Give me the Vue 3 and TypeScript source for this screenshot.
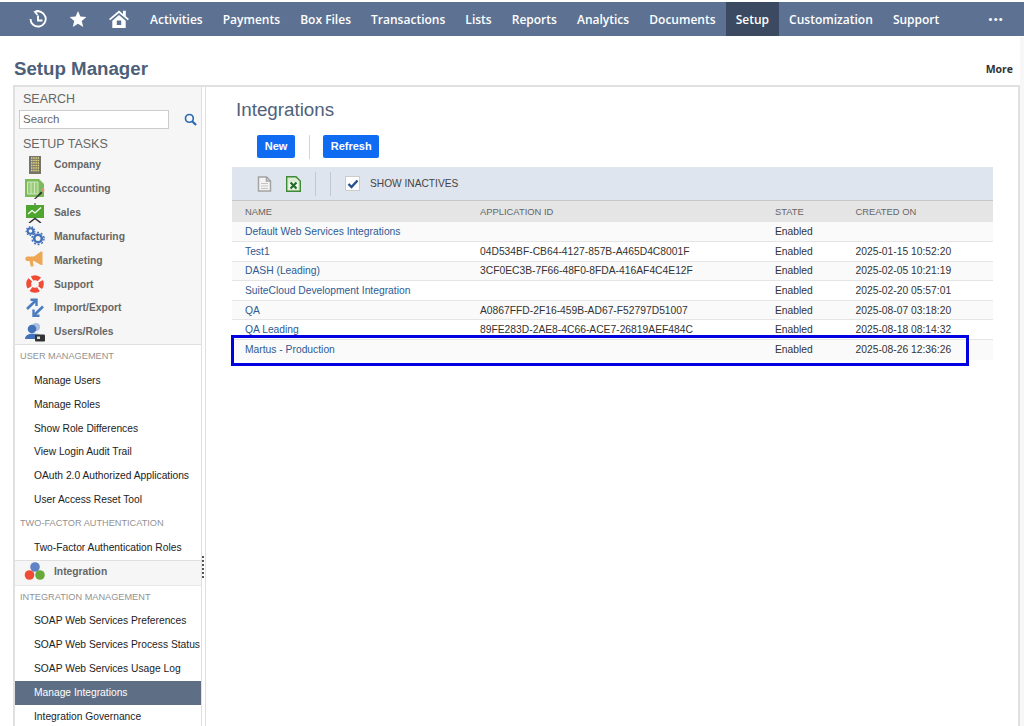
<script setup lang="ts">
const navItems = ['Activities','Payments','Box Files','Transactions','Lists','Reports','Analytics','Documents','Setup','Customization','Support']
const tasks = ['Company','Accounting','Sales','Manufacturing','Marketing','Support','Import/Export','Users/Roles']
const userLinks = ['Manage Users','Manage Roles','Show Role Differences','View Login Audit Trail','OAuth 2.0 Authorized Applications','User Access Reset Tool']
const integrationLinks = ['SOAP Web Services Preferences','SOAP Web Services Process Status','SOAP Web Services Usage Log','Manage Integrations','Integration Governance']
const rows = [
  { name:'Default Web Services Integrations', id:'', state:'Enabled', created:'' },
  { name:'Test1', id:'04D534BF-CB64-4127-857B-A465D4C8001F', state:'Enabled', created:'2025-01-15 10:52:20' },
  { name:'DASH (Leading)', id:'3CF0EC3B-7F66-48F0-8FDA-416AF4C4E12F', state:'Enabled', created:'2025-02-05 10:21:19' },
  { name:'SuiteCloud Development Integration', id:'', state:'Enabled', created:'2025-02-20 05:57:01' },
  { name:'QA', id:'A0867FFD-2F16-459B-AD67-F52797D51007', state:'Enabled', created:'2025-08-07 03:18:20' },
  { name:'QA Leading', id:'89FE283D-2AE8-4C66-ACE7-26819AEF484C', state:'Enabled', created:'2025-08-18 08:14:32' },
  { name:'Martus - Production', id:'', state:'Enabled', created:'2025-08-26 12:36:26' },
]
</script>

<template>
  <div class="page">
    <nav class="nav">
      <div class="nav-icons">
        <svg width="18" height="18" viewBox="0 0 18 18" fill="none" stroke="#fff" stroke-width="1.900"><path d="M6 2 A7.600 7.600 0 1 1 1.500 9"/><path d="M9.500 .3 L5.800 1.900 L8.500 5" stroke-width="1.600"/><path d="M9 5.500 V10.500 H13.500" /></svg>
        <svg width="18" height="18" viewBox="0 0 20 20" fill="#fff"><path d="M10 1 L12.600 7.200 L19.300 7.800 L14.200 12.200 L15.800 18.800 L10 15.300 L4.200 18.800 L5.800 12.200 L.7 7.800 L7.400 7.200 Z"/></svg>
        <svg width="20" height="18" viewBox="0 0 20 18" fill="#fff"><path d="M10 .5 L0 9 L1.200 10.300 L10 3 L18.800 10.300 L20 9 L16.800 6.300 V.8 H14 V4 Z"/><path fill-rule="evenodd" d="M3.300 10.800 L10 5 L16.700 10.800 V18 H3.300 Z M7.800 10.500 H12.200 V15 H7.800 Z"/></svg>
      </div>
      <a v-for="item in navItems" :key="item" class="nav-item" :class="{ active: item === 'Setup' }">{{ item }}</a>
      <span class="nav-more">•••</span>
    </nav>

    <header class="title-row">
      <h1>Setup Manager</h1>
      <span class="more">More</span>
    </header>

    <div class="frame">
      <aside class="sidebar">
        <div class="tasks-panel">
          <div class="panel-label">SEARCH</div>
          <div class="search-row">
            <div class="search-box">Search</div>
            <svg width="13" height="13" viewBox="0 0 14 14" fill="none" stroke="#2b6cb0" stroke-width="1.800"><circle cx="5.800" cy="5.800" r="4.200"/><path d="M8.800 8.800 L13 13" stroke-width="2.400"/></svg>
          </div>
          <div class="panel-label tasks-label">SETUP TASKS</div>
          <div v-for="t in tasks" :key="t" class="task">
            <span class="task-icon">
              <svg v-if="t === 'Company'" width="20" height="20" viewBox="0 0 20 20"><rect x="4" y="1" width="12" height="18" fill="#74746a"/><path d="M6 3h8M6 5.500h8M6 8h8M6 10.500h8M6 13h8M6 15.500h8" stroke="#e8d77d" stroke-width="1.300" stroke-dasharray="1.500 .7"/></svg>
              <svg v-else-if="t === 'Accounting'" width="22" height="20" viewBox="0 0 22 20"><path d="M1 0 H15 L20 5 V18 H1 Z" fill="#7dbb5a"/><path d="M3.500 3 H14 V15 H3.500Z M7 3 V15 M10.500 3 V15" stroke="#cfe8bd" fill="#9ccc7a"/><path d="M10 20 L17 12.500 L18.500 14 L11.500 20Z" fill="#333"/><circle cx="19" cy="11" r="1.500" fill="#f08a8a"/></svg>
              <svg v-else-if="t === 'Sales'" width="20" height="20" viewBox="0 0 20 20"><rect x="1" y="2" width="18" height="13" fill="#4ea62f"/><path d="M3 11 L7 7.500 L10 10 L16 4.500" stroke="#fff" fill="none" stroke-width="1.300"/><path d="M10 0 V2" stroke="#333"/><path d="M4 20 L10 15.500 L16 20" stroke="#333" fill="none" stroke-width="1.500"/></svg>
              <svg v-else-if="t === 'Manufacturing'" width="20" height="20" viewBox="0 0 20 20" fill="none"><circle cx="5.500" cy="5" r="2.800" stroke="#4472b8" stroke-width="2"/><circle cx="5.500" cy="5" r="4.300" stroke="#4472b8" stroke-width="1.300" stroke-dasharray="1.500 1.500"/><circle cx="13" cy="12.500" r="3.800" stroke="#4472b8" stroke-width="2.600"/><circle cx="13" cy="12.500" r="6" stroke="#4472b8" stroke-width="1.500" stroke-dasharray="2 1.800"/></svg>
              <svg v-else-if="t === 'Marketing'" width="20" height="20" viewBox="0 0 20 20" fill="#eda755"><path d="M2.500 6.500 H9 L16 1.500 H17.500 V15 H16 L9 11 H2.500 A2.250 2.250 0 0 1 2.500 6.500 Z"/><path d="M4.500 11 H8 L8.500 16.500 H5.800 Z"/></svg>
              <svg v-else-if="t === 'Support'" width="20" height="20" viewBox="0 0 20 20" fill="none"><circle cx="10" cy="10" r="6.300" stroke="#ef4b37" stroke-width="5"/><circle cx="10" cy="10" r="6.300" stroke="#fff" stroke-width="5.400" stroke-dasharray="2 7.900" stroke-dashoffset="-3.950"/></svg>
              <svg v-else-if="t === 'Import/Export'" width="20" height="20" viewBox="0 0 20 20" fill="none" stroke="#4b7cc0" stroke-width="2.600"><path d="M2 11 L10.500 2.800"/><path d="M5.500 1.800 H11.500 V8" stroke-width="2.400"/><path d="M18 8.500 L9.500 16.800"/><path d="M14.500 17.800 H8.500 V11.500" stroke-width="2.400"/></svg>
              <svg v-else-if="t === 'Users/Roles'" width="22" height="20" viewBox="0 0 22 20"><circle cx="12" cy="5" r="4" fill="#a8bfdf"/><path d="M7 16 C7 10 17 10 17 16Z" fill="#a8bfdf"/><circle cx="8" cy="7" r="4.300" fill="#4472b8"/><path d="M1 17 C1 10 15 10 15 17 Z" fill="#4472b8"/><rect x="11" y="12.500" width="10" height="7" rx="1" fill="#333"/><rect x="13" y="14.500" width="3" height="2.500" fill="#ddd"/></svg>
            </span>
            <span class="task-text">{{ t }}</span>
          </div>
        </div>
        <div class="section-label first">USER MANAGEMENT</div>
        <a v-for="l in userLinks" :key="l" class="link">{{ l }}</a>
        <div class="section-label">TWO-FACTOR AUTHENTICATION</div>
        <a class="link">Two-Factor Authentication Roles</a>
        <div class="task group">
          <span class="task-icon">
            <svg width="22" height="22" viewBox="0 0 22 22"><circle cx="11" cy="6" r="4.800" fill="#5f83c4"/><circle cx="5.500" cy="14" r="4.800" fill="#ef4b37"/><circle cx="16" cy="14" r="4.800" fill="#68a93a"/></svg>
          </span>
          <span class="task-text">Integration</span>
        </div>
        <div class="section-label">INTEGRATION MANAGEMENT</div>
        <a v-for="l in integrationLinks" :key="l" class="link" :class="{ current: l === 'Manage Integrations' }">{{ l }}</a>
      </aside>

      <div class="divider"><span class="grip"></span></div>

      <main class="main">
        <h2>Integrations</h2>
        <div class="actions">
          <button class="btn">New</button>
          <span class="action-sep"></span>
          <button class="btn">Refresh</button>
        </div>
        <div class="table-wrap">
          <div class="toolbar">
            <svg class="doc-icon" width="15" height="16" viewBox="0 0 15 16" fill="none" stroke="#a3a3a3" stroke-width="1.500"><path d="M1.500 1 H9.500 L13.500 5 V15 H1.500 Z" fill="#f4f4f4"/><path d="M9.500 1 V5 H13.500"/><path d="M4 7.500 H11 M4 10 H11 M4 12.500 H11" stroke="#c4c4c4" stroke-width="1"/></svg>
            <svg class="xls-icon" width="15" height="16" viewBox="0 0 15 16"><path d="M.7 .7 H10 L14.300 5 V15.300 H.7 Z" fill="#dcecd2" stroke="#3f8a35" stroke-width="1.400"/><path d="M3 6 H12 V13 H3 Z" fill="#f3f8ee"/><path d="M4.500 6.500 L10.500 12.500 M10.500 6.500 L4.500 12.500" stroke="#1f6b2a" stroke-width="2.200"/></svg>
            <span class="tool-sep"></span>
            <span class="tool-sep"></span>
            <span class="check">
              <svg width="12" height="10" viewBox="0 0 12 10" fill="none" stroke="#24508f" stroke-width="2.400"><path d="M1.500 5 L4.500 8 L10.500 1.500"/></svg>
            </span>
            <span class="show-label">SHOW INACTIVES</span>
          </div>
          <div class="row head">
            <span class="c-name">NAME</span>
            <span class="c-id">APPLICATION ID</span>
            <span class="c-state">STATE</span>
            <span class="c-created">CREATED ON</span>
          </div>
          <div v-for="(r, i) in rows" :key="r.name" class="row body" :class="{ odd: i % 2 === 0, last: i === rows.length - 1 }">
            <a class="c-name name-link">{{ r.name }}</a>
            <span class="c-id">{{ r.id }}</span>
            <span class="c-state">{{ r.state }}</span>
            <span class="c-created">{{ r.created }}</span>
          </div>
          <div class="highlight"></div>
        </div>
      </main>
      <div class="edge"></div>
    </div>
  </div>
</template>

<style>
html, body { margin: 0; background: #fff; }
</style>

<style scoped>
.page { width: 1024px; height: 726px; overflow: hidden; position: relative; font-family: "Liberation Sans", Arial, sans-serif; background: #fff; display: flex; flex-direction: column; box-sizing: border-box; padding-top: 2px; }
.nav { height: 34px; background: #5d7293; display: flex; align-items: stretch; flex: none; position: relative; }
.nav-icons { width: 140px; padding-left: 29px; box-sizing: border-box; display: flex; align-items: center; gap: 22px; flex: none; }
.nav-item { font-family: "Open Sans", sans-serif; font-weight: 600; font-size: 12px; color: #fff; padding: 1px 10.050px 0; display: flex; align-items: center; white-space: nowrap; }
.nav-item.active { background: #3b4a61; }
.nav-more { color: #fff; font-size: 11px; letter-spacing: 1.300px; margin-left: auto; margin-right: 20px; align-self: center; }
.title-row { height: 49px; flex: none; display: flex; justify-content: space-between; align-items: center; padding: 16px 11px 0 14px; box-sizing: border-box; }
h1 { margin: 0; font-size: 18.700px; font-weight: 700; color: #4d5f79; }
.more { font-family: "Open Sans", sans-serif; font-size: 10.500px; font-weight: 700; color: #333; }
.frame { flex: 1; margin-left: 13px; width: 1007px; box-sizing: border-box; border: 2px solid #e0e0e0; border-bottom: 0; display: flex; min-height: 0; position: relative; }
.edge { position: absolute; left: 100%; margin-left: 2px; top: -50px; width: 4px; height: 700px; background: #f7f7f7; }
.sidebar { width: 186px; flex: none; display: flex; flex-direction: column; overflow: hidden; background: #fff; }
.sidebar > * { flex: none; }
.tasks-panel { background: #f6f6f6; border-bottom: 1px solid #e0e0e0; height: 258px; box-sizing: border-box; padding-top: 5px; }
.panel-label { font-size: 12.500px; color: #666; padding-left: 8px; line-height: 14px; }
.search-row { display: flex; align-items: center; margin: 4px 0 0 4px; gap: 15px; }
.search-box { width: 145px; height: 17px; border: 1px solid #ccc; background: #fff; font-size: 11.500px; line-height: 17px; color: #666; padding-left: 3px; }
.tasks-label { margin-top: 8px; margin-bottom: 2px; }
.task { height: 23.850px; display: flex; align-items: center; font-size: 10.300px; font-weight: 700; color: #666; }
.task-icon { padding-left: 5px; width: 30px; display: flex; justify-content: center; flex: none; }
.task-text { white-space: nowrap; margin-left: 4px; }
.section-label { font-size: 9.200px; color: #929292; line-height: 23.850px; height: 23.850px; padding-left: 5px; white-space: nowrap; }
.link { display: block; height: 23.850px; line-height: 23.850px; font-size: 10.250px; color: #222; padding-left: 19px; white-space: nowrap; }
.link.current { background: #5d6e85; color: #fff; }
.group { background: #f6f6f6; border-top: 1px solid #e0e0e0; border-bottom: 1px solid #e8e8e8; box-sizing: border-box; height: 26px; padding-bottom: 2px; }
.divider { width: 5px; flex: none; background: #fff; border-left: 1px solid #e0e0e0; border-right: 1px solid #e0e0e0; box-sizing: border-box; position: relative; }
.grip { position: absolute; left: 0; top: 469px; height: 22px; width: 2px; border-left: 2px dotted #555; }
.main { flex: 1; padding-left: 30px; min-width: 0; }
h2 { margin: 0; padding-top: 11px; font-size: 18.800px; line-height: 24px; font-weight: 400; color: #50627b; }
.actions { display: flex; align-items: center; margin: 13px 0 0 21px; height: 23px; }
.btn { height: 23px; padding: 0 7.700px 2px; border: 0; border-radius: 2px; background: #0f6cf2; color: #fff; font: 700 11px "Liberation Sans", Arial, sans-serif; }
.action-sep { width: 1px; height: 24px; background: #d5d5d5; margin: 0 13.500px; }
.table-wrap { width: 761px; margin: 9px 0 0 -4px; position: relative; }
.toolbar { height: 33px; background: #dfe5ee; display: flex; align-items: center; padding-left: 25px; box-sizing: border-box; }
.xls-icon { margin-left: 14px; }
.tool-sep { width: 1px; height: 24px; background: #c3c8d0; margin-left: 14px; }
.check { width: 13px; height: 13px; background: #fff; border: 1px solid #ccc; margin-left: 14px; display: flex; align-items: center; justify-content: center; }
.show-label { font-size: 10.200px; color: #444; margin-left: 10px; }
.row { display: flex; align-items: center; box-sizing: border-box; font-size: 10.300px; color: #333; white-space: nowrap; }
.head { height: 22.300px; background: #e5e5e5; border-top: 1px solid #c8c8c8; color: #666; font-size: 9.400px; }
.body { height: 19.620px; border-bottom: 1px solid #e5e5e5; background: #fff; }
.body.odd { background: #fafafa; }
.body.last { border-bottom: 0; }
.c-name { padding-left: 13px; flex: none; width: 235px; }
.c-id { width: 295px; flex: none; }
.c-state { width: 80.500px; flex: none; }
.name-link { color: #2e5a94; }
.highlight { position: absolute; left: -1px; top: 168px; width: 738px; height: 31px; box-sizing: border-box; border: 3px solid #0000e0; pointer-events: none; }
</style>
